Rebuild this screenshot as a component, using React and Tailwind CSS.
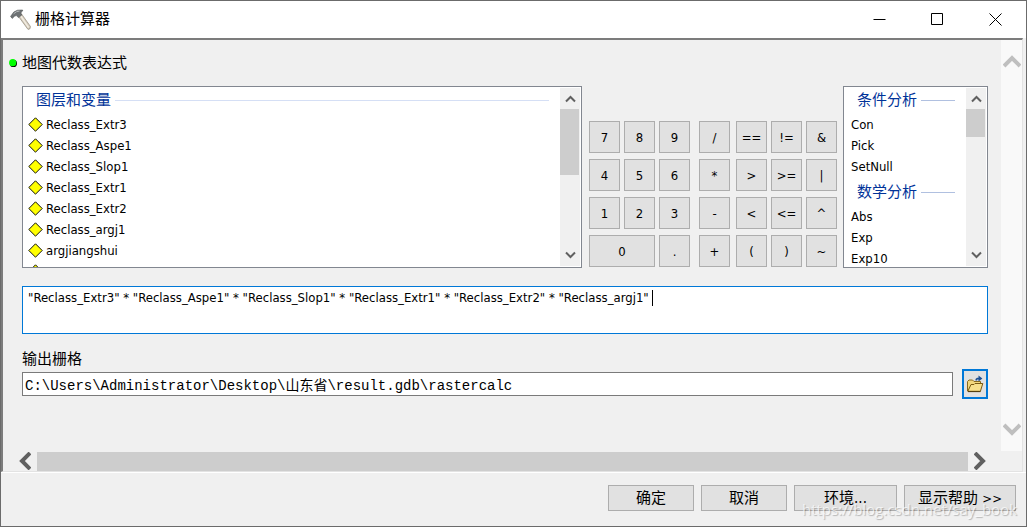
import React, { useState } from 'react';

const LAYERS = [
  'Reclass_Extr3',
  'Reclass_Aspe1',
  'Reclass_Slop1',
  'Reclass_Extr1',
  'Reclass_Extr2',
  'Reclass_argj1',
  'argjiangshui',
];

const TOOL_GROUPS = [
  { title: '条件分析', tools: ['Con', 'Pick', 'SetNull'] },
  { title: '数学分析', tools: ['Abs', 'Exp', 'Exp10'] },
];

const DIGITS = ['7', '8', '9', '4', '5', '6', '1', '2', '3', '0', '.'];
const ARITHMETIC = ['/', '*', '-', '+'];
const LOGIC = ['==', '!=', '&', '>', '>=', '|', '<', '<=', '^', '(', ')', '~'];

const INITIAL_EXPRESSION =
  '"Reclass_Extr3" * "Reclass_Aspe1" * "Reclass_Slop1" * "Reclass_Extr1" * "Reclass_Extr2" * "Reclass_argj1"';

function HammerIcon() {
  return (
    <svg width="22" height="22" viewBox="0 0 22 22" aria-hidden="true">
      <path d="M9.2 7 L12.4 4.8 L21.4 17.4 Q21.8 20.4 19 20.4 Z" fill="#d6cdbd" stroke="#9c9486" strokeWidth="0.8" />
      <path d="M11.8 7 L19.6 18.6" stroke="#f3ede2" strokeWidth="1.4" />
      <path
        d="M1.6 7.4 L4.8 3 Q8 .4 13.6 1 L13.6 2 Q11.6 2.6 12 4.6 L12.8 6 L9.4 8.6 L7.4 6.6 L5.8 7 L3.2 9.4 Z"
        fill="#6e7274"
        stroke="#505456"
        strokeWidth="0.6"
      />
      <path d="M4.6 4.8 Q7 2.2 10.6 2" stroke="#b4b8ba" strokeWidth="1" fill="none" />
    </svg>
  );
}

function Chevron({ d, width, height, stroke }) {
  return (
    <svg width={width} height={height} viewBox={`0 0 ${width} ${height}`} fill="none" aria-hidden="true">
      <path d={d} stroke="currentColor" strokeWidth={stroke} />
    </svg>
  );
}

function DiamondIcon() {
  return (
    <svg width="15" height="15" viewBox="0 0 15 15" className="shrink-0" aria-hidden="true">
      <path d="M7.5 .8 L14.2 7.5 L7.5 14.2 L.8 7.5 Z" fill="#ffff00" stroke="#111" strokeWidth="1" />
    </svg>
  );
}

function FolderIcon() {
  return (
    <svg width="18" height="18" viewBox="0 0 18 18" aria-hidden="true">
      <path d="M1.5 16 V6.5 L3 5 H6.5 L8 6.5 H14.5 V9" fill="#f3d77c" stroke="#8a6a1c" />
      <path d="M1.8 16.3 L5 9.5 H8 L9 8.5 H16.8 L14.4 16.3 Z" fill="#f8e08c" stroke="#7a5a12" />
      <path d="M2 16.6 H14.5" stroke="#4e3a0a" />
      <path d="M9.5 5.5 V4 L11 2.8 H12.5 V.6 L16.4 3.6 L12.5 6.4 V4.6 H11.2 V5.5 Z" fill="#1c4f93" />
    </svg>
  );
}

function CaptionButton({ label, children }) {
  return (
    <button type="button" aria-label={label} className="flex h-9 w-[58px] items-center justify-center">
      <svg width="13" height="13" viewBox="0 0 13 13" fill="none" stroke="#000" aria-hidden="true">
        {children}
      </svg>
    </button>
  );
}

function GroupHeader({ rule, children }) {
  return (
    <div className="flex h-[27px] items-center gap-1 pr-[11px] pl-[13px] text-[15px] text-[#003399]">
      <span>{children}</span>
      <span className={`h-px flex-1 ${rule}`} />
    </div>
  );
}

function ListScrollbar({ thumb }) {
  return (
    <div className="my-px mr-px flex w-5 shrink-0 flex-col bg-[#f0f0f0] text-[#606060]">
      <div className="flex h-[21px] items-center justify-center">
        <Chevron d="M1 6.5 L5.5 2 L10 6.5" width={11} height={8} stroke={2} />
      </div>
      <div className={`mr-px bg-[#cdcdcd] ${thumb}`} />
      <div className="mt-auto flex h-[23px] items-center justify-center">
        <Chevron d="M1 1.5 L5.5 6 L10 1.5" width={11} height={8} stroke={2} />
      </div>
    </div>
  );
}

function Key({ label, onPress, className = '' }) {
  return (
    <button
      type="button"
      onClick={() => onPress(label)}
      className={`h-8 border border-[#adadad] bg-[#e1e1e1] leading-none ${className}`}
    >
      {label}
    </button>
  );
}

function FooterButton({ className, children }) {
  return (
    <button type="button" className={`h-[26px] border border-[#adadad] bg-[#e1e1e1] text-[15px] leading-none ${className}`}>
      {children}
    </button>
  );
}

export default function App() {
  const [expression, setExpression] = useState(INITIAL_EXPRESSION);
  const [output, setOutput] = useState('C:\\Users\\Administrator\\Desktop\\山东省\\result.gdb\\rastercalc');

  const append = (token) => setExpression((prev) => prev + token);

  return (
    <div className="relative flex min-h-screen flex-col border border-[#6b6b6b] bg-[#f0f0f0] font-['DejaVu_Sans_Condensed','Noto_Sans_CJK_SC',sans-serif] text-[13px] text-black">
      <header className="flex h-[37px] shrink-0 items-center bg-white pl-2">
        <HammerIcon />
        <h1 className="ml-1 text-[15px]">栅格计算器</h1>
        <div className="ml-auto flex pr-[2px]">
          <CaptionButton label="最小化">
            <path d="M.5 6.5 H12.5" />
          </CaptionButton>
          <CaptionButton label="最大化">
            <path d="M.5 .5 H11.5 V11.5 H.5 Z" />
          </CaptionButton>
          <CaptionButton label="关闭">
            <path d="M.5 .5 L12.5 12.5 M12.5 .5 L.5 12.5" />
          </CaptionButton>
        </div>
      </header>

      <main className="mr-[3px] flex flex-1 flex-col border-t-2 border-r border-b border-l-2 border-t-[#7c7c7c] border-r-[#e3e3e3] border-b-[#e3e3e3] border-l-[#7c7c7c]">
        <div className="flex flex-1">
          <div className="min-w-0 flex-1 pr-[13px] pl-[19px]">
            <div className="-ml-[13px] flex h-[46px] items-center gap-[5px] text-[15px]">
              <svg width="8" height="8" viewBox="0 0 8 8" aria-hidden="true">
                <circle cx="4.4" cy="4.4" r="3.6" fill="#000" />
                <circle cx="3.7" cy="3.7" r="3.6" fill="#00ff00" />
              </svg>
              <label htmlFor="expression">地图代数表达式</label>
            </div>

            <div className="flex items-end">
              <section className="flex h-[182px] min-w-0 flex-1 border border-[#828790] bg-white">
                <div className="min-w-0 flex-1 overflow-hidden">
                  <GroupHeader rule="bg-[#d5dff5]">图层和变量</GroupHeader>
                  <ul>
                    {LAYERS.map((name) => (
                      <li key={name} className="flex h-[21px] items-center gap-[3px] pl-[5px]">
                        <DiamondIcon />
                        {name}
                      </li>
                    ))}
                    <li className="flex h-[21px] items-center pl-[5px]">
                      <DiamondIcon />
                    </li>
                  </ul>
                </div>
                <ListScrollbar thumb="h-[66px]" />
              </section>

              <section className="mb-px ml-[7px] flex">
                <div className="grid grid-cols-[31px_31px_31px] gap-x-1 gap-y-[6px]">
                  {DIGITS.map((digit) => (
                    <Key key={digit} label={digit} onPress={append} className={digit === '0' ? 'col-span-2' : ''} />
                  ))}
                </div>
                <div className="ml-[9px] grid w-[31px] gap-y-[6px]">
                  {ARITHMETIC.map((op) => (
                    <Key key={op} label={op} onPress={append} />
                  ))}
                </div>
                <div className="ml-[6px] grid grid-cols-[31px_31px_31px] gap-x-1 gap-y-[6px]">
                  {LOGIC.map((op) => (
                    <Key key={op} label={op} onPress={append} />
                  ))}
                </div>
              </section>

              <section className="ml-[6px] flex h-[182px] w-[145px] border border-[#828790] bg-white">
                <div className="flex min-w-0 flex-1 flex-col gap-[2px] overflow-hidden">
                  {TOOL_GROUPS.map((group) => (
                    <div key={group.title}>
                      <GroupHeader rule="bg-[#b0c0e0]">{group.title}</GroupHeader>
                      <ul>
                        {group.tools.map((tool) => (
                          <li key={tool} className="flex h-[21px] items-center pl-[7px]">
                            {tool}
                          </li>
                        ))}
                      </ul>
                    </div>
                  ))}
                </div>
                <ListScrollbar thumb="h-7" />
              </section>
            </div>

            <div className="relative mt-[18px]">
              <textarea
                id="expression"
                value={expression}
                onChange={(e) => setExpression(e.target.value)}
                className="block h-12 w-full resize-none border border-[#0078d7] bg-white px-[5px] py-[3px] leading-4 outline-none"
              />
              <span className="absolute top-[4px] left-[630px] h-4 w-px bg-black" />
            </div>

            <label htmlFor="output" className="mt-[15px] block text-[15px] leading-5">
              输出栅格
            </label>
            <div className="flex items-center gap-[9px]">
              <input
                id="output"
                type="text"
                value={output}
                onChange={(e) => setOutput(e.target.value)}
                className="h-6 min-w-0 flex-1 border border-[#7a7a7a] bg-white px-[2px] font-['Liberation_Mono','Noto_Sans_CJK_SC',monospace] text-[14px] outline-none"
              />
              <button
                type="button"
                aria-label="浏览"
                className="flex h-[30px] w-[26px] items-center justify-center border-2 border-[#0078d7] bg-[#e1e1e1]"
              >
                <FolderIcon />
              </button>
            </div>
          </div>

          <div className="flex w-[21px] flex-col items-center justify-between bg-[#f9f9f9] pt-[14px] pb-[14px] text-[#bfbfbf]">
            <Chevron d="M1 12 L9 4 L17 12" width={18} height={14} stroke={4} />
            <Chevron d="M1 2 L9 10 L17 2" width={18} height={14} stroke={4} />
          </div>
        </div>

        <div className="mr-[35px] ml-[15px] flex h-5 items-center gap-[6px] text-[#606060]">
          <Chevron d="M12 1 L4 9 L12 17" width={13} height={18} stroke={4} />
          <div className="h-[19px] flex-1 bg-[#cdcdcd]" />
          <Chevron d="M1 1 L9 9 L1 17" width={13} height={18} stroke={4} />
        </div>
      </main>

      <footer className="flex h-[54px] shrink-0 items-start justify-end gap-[7px] border-t border-white pt-[12px] pr-[10px]">
        <FooterButton className="w-[86px]">确定</FooterButton>
        <FooterButton className="w-[86px]">取消</FooterButton>
        <FooterButton className="w-[103px]">环境...</FooterButton>
        <FooterButton className="w-[112px]">
          显示帮助 <span className="text-[13px]">&gt;&gt;</span>
        </FooterButton>
      </footer>

      <span className="pointer-events-none absolute right-[9px] bottom-[5px] font-['Open_Sans',sans-serif] text-[15px] leading-6 text-white/70 [text-shadow:1px_1px_1px_rgba(0,0,0,0.25)]">
        https://blog.csdn.net/say_book
      </span>
    </div>
  );
}
